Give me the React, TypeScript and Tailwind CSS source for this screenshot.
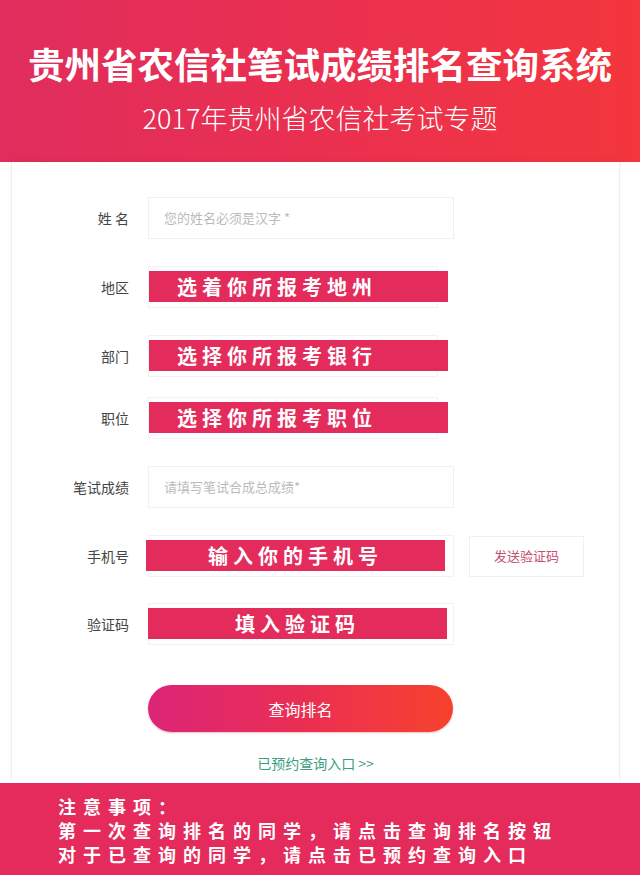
import React from "react";

const font = { fontFamily: '"Noto Sans CJK SC", "Noto Sans", sans-serif' };

function Label({ children }: { children: React.ReactNode }) {
  return (
    <div className="w-[117px] shrink-0 text-right text-[14px] leading-[20px] text-[#444]">
      {children}
    </div>
  );
}

function Banner({ text, center }: { text: string; center?: boolean }) {
  return (
    <div
      className={`flex h-full w-full items-center bg-[#e42c5c] text-[20px] font-bold tracking-[5px] text-white ${
        center ? "justify-center" : "pl-[28px]"
      }`}
    >
      {text}
    </div>
  );
}

export default function App() {
  return (
    <div className="min-h-[876px] w-[640px] overflow-hidden bg-white" style={font}>
      {/* header */}
      <div className="flex h-[162px] flex-col items-center bg-gradient-to-r from-[#e02d5d] via-[#ea3050] to-[#f3363c] pt-[38px] text-white">
        <div className="text-[36.5px] font-bold leading-[52px]">贵州省农信社笔试成绩排名查询系统</div>
        <div className="mt-[10px] text-[27px] font-light leading-[36px]">2017年贵州省农信社考试专题</div>
      </div>

      {/* card */}
      <div className="ml-[11px] w-[609px] border-x border-[#eeeeee] bg-white pb-[7px] pt-[35px] shadow-[0_-2px_4px_rgba(0,0,0,0.04)]">
        {/* 姓名 */}
        <div className="flex h-[42px] items-center">
          <Label>姓 名</Label>
          <div className="ml-[19px] flex h-[42px] w-[306px] items-center border border-[#f0f0f0] pl-[15px] text-[13px] text-[#bbbbbb]">
            您的姓名必须是汉字 *
          </div>
        </div>

        {/* 地区 */}
        <div className="mt-[27px] flex h-[42px] items-center">
          <Label>地区</Label>
          <div className="relative ml-[19px] h-[42px] w-[290px] border border-[#f2f2f2]">
            <div className="absolute left-[0px] top-[4px] h-[31px] w-[299px]">
              <Banner text="选着你所报考地州" />
            </div>
          </div>
        </div>

        {/* 部门 */}
        <div className="mt-[27px] flex h-[42px] items-center">
          <Label>部门</Label>
          <div className="relative ml-[19px] h-[42px] w-[290px] border border-[#f2f2f2]">
            <div className="absolute left-[0px] top-[4px] h-[31px] w-[299px]">
              <Banner text="选择你所报考银行" />
            </div>
          </div>
        </div>

        {/* 职位 */}
        <div className="mt-[20px] flex h-[42px] items-center">
          <Label>职位</Label>
          <div className="relative ml-[19px] h-[42px] w-[290px] border border-[#f2f2f2]">
            <div className="absolute left-[0px] top-[4px] h-[31px] w-[299px]">
              <Banner text="选择你所报考职位" />
            </div>
          </div>
        </div>

        {/* 笔试成绩 */}
        <div className="mt-[27px] flex h-[42px] items-center">
          <Label>笔试成绩</Label>
          <div className="ml-[19px] flex h-[42px] w-[306px] items-center border border-[#f0f0f0] pl-[15px] text-[13px] text-[#bbbbbb]">
            请填写笔试合成总成绩*
          </div>
        </div>

        {/* 手机号 */}
        <div className="mt-[27px] flex h-[42px] items-center">
          <Label>手机号</Label>
          <div className="relative ml-[19px] h-[42px] w-[306px] border border-[#f2f2f2]">
            <div className="absolute left-[-3px] top-[4px] h-[31px] w-[299px]">
              <Banner text="输入你的手机号" center />
            </div>
          </div>
          <div className="ml-[15px] flex h-[41px] w-[115px] items-center justify-center border border-[#f0f0f0] text-[13px] text-[#c4506e]">
            发送验证码
          </div>
        </div>

        {/* 验证码 */}
        <div className="mt-[26px] flex h-[42px] items-center">
          <Label>验证码</Label>
          <div className="relative ml-[19px] h-[42px] w-[306px] border border-[#f2f2f2]">
            <div className="absolute left-[-1px] top-[4px] h-[31px] w-[299px]">
              <Banner text="填入验证码" center />
            </div>
          </div>
        </div>

        {/* button */}
        <div className="ml-[136px] mt-[40px] flex h-[47px] w-[305px] items-center justify-center rounded-full bg-gradient-to-r from-[#dc2478] via-[#ea2e52] to-[#f6422a] text-[16px] text-white shadow-[0_1px_2px_rgba(200,40,60,0.3)]">
          查询排名
        </div>

        {/* link */}
        <div className="mt-[21px] flex h-[20px] items-center justify-center text-[14px] text-[#3a9e80]">
          已预约查询入口 &gt;&gt;
        </div>
      </div>

      {/* footer */}
      <div className="mt-[3px] h-[92px] bg-[#e42b5c] pl-[58px] pt-[11px] text-[18px] font-bold leading-[24px] tracking-[7px] text-white">
        <div>注意事项：</div>
        <div>第一次查询排名的同学，请点击查询排名按钮</div>
        <div>对于已查询的同学，请点击已预约查询入口</div>
      </div>
    </div>
  );
}
